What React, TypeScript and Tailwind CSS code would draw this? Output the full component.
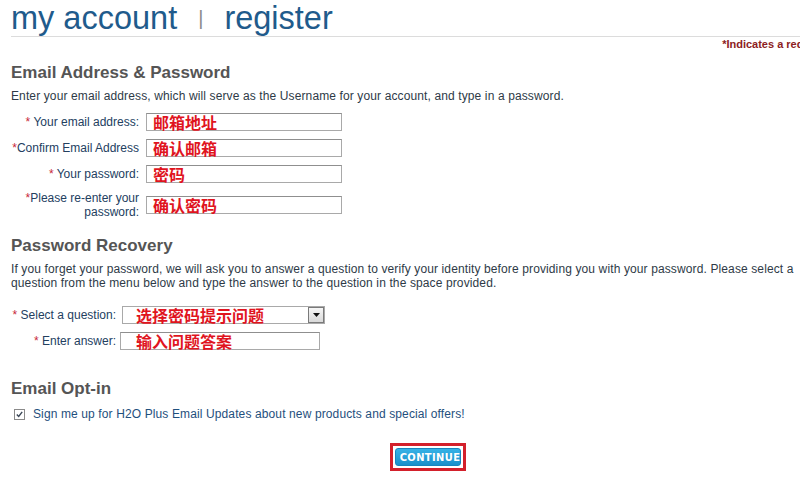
import React from 'react';

const sans = { fontFamily: '"Liberation Sans", Arial, sans-serif' };
const cjk = '[font-family:"Noto_Sans_CJK_SC",sans-serif]';

function Req({ spaced = true }: { spaced?: boolean }) {
  return <span className="text-[#c8283a]">*{spaced ? ' ' : ''}</span>;
}

function FieldBox({ text, w, pl }: { text: string; w: string; pl: string }) {
  return (
    <div className={`flex h-[18px] items-center border border-[#a9a9a9] border-t-[#8f8f8f] bg-white ${w} ${pl}`}>
      <span className={`text-[16px] font-bold leading-none text-[#e0141e] ${cjk}`}>{text}</span>
    </div>
  );
}

export default function App() {
  const rows = [
    { label: 'Your email address:', spaced: true, value: '邮箱地址' },
    { label: 'Confirm Email Address', spaced: false, value: '确认邮箱' },
    { label: 'Your password:', spaced: true, value: '密码' },
  ];

  return (
    <div className="h-[481px] w-[800px] overflow-hidden bg-white" style={sans}>
      <div className="w-[856px] pl-[11px]">
        {/* page title */}
        <div className="flex h-[37px] items-start gap-[21px] border-b border-[#dcdcdc] pt-[2px] text-[32.5px] leading-[32px] text-[#1f5b8c]">
          <span>my account</span>
          <span className="pt-[5px] text-[20px] leading-[22px] text-[#8c8c8c]">|</span>
          <span>register</span>
        </div>
        <div className="flex justify-end pt-[1px] text-[11px] font-bold leading-[13px] text-[#8c1c22]">
          <span className="whitespace-nowrap">*Indicates a required field</span>
        </div>

        {/* email & password */}
        <h2 className="mt-[12px] text-[17px] font-bold leading-[20px] text-[#555555]">Email Address &amp; Password</h2>
        <p className="mt-[6px] text-[12px] leading-[14px] tracking-[0.12px] text-[#2e3a47]">
          Enter your email address, which will serve as the Username for your account, and type in a password.
        </p>
        <div className="mt-[10px] flex flex-col gap-[8px] text-[12px] leading-[13px] text-[#23405f]">
          {rows.map((r) => (
            <div key={r.label} className="flex items-center gap-[7px]">
              <div className="w-[128px] text-right whitespace-nowrap">
                <Req spaced={r.spaced} />
                {r.label}
              </div>
              <FieldBox text={r.value} w="w-[196px]" pl="pl-[6px]" />
            </div>
          ))}
          <div className="flex items-center gap-[7px]">
            <div className="w-[128px] text-right leading-[14px]">
              <Req spaced={false} />
              Please re-enter your
              <br />
              password:
            </div>
            <FieldBox text="确认密码" w="w-[196px]" pl="pl-[6px]" />
          </div>
        </div>

        {/* recovery */}
        <h2 className="mt-[17px] text-[17px] font-bold leading-[20px] text-[#555555]">Password Recovery</h2>
        <p className="mt-[6px] w-[796px] text-[12px] leading-[14px] tracking-[0.12px] text-[#2e3a47]">
          If you forget your password, we will ask you to answer a question to verify your identity before providing you with your password. Please select a question from the menu below and type the answer to the question in the space provided.
        </p>
        <div className="mt-[16px] flex flex-col gap-[8px] text-[12px] leading-[13px] text-[#23405f]">
          <div className="flex items-center gap-[6px]">
            <div className="w-[105px] text-right whitespace-nowrap">
              <Req />
              Select a question:
            </div>
            <div className="flex h-[18px] w-[203px] items-center justify-between border border-[#a9a9a9] bg-white pl-[13px]">
              <span className={`text-[16px] font-bold leading-none text-[#e0141e] ${cjk}`}>选择密码提示问题</span>
              <span className="flex h-[16px] w-[16px] items-center justify-center border border-[#7a7a7a] bg-gradient-to-b from-[#f6f6f6] to-[#d9d9d9]">
                <svg width="7" height="4" viewBox="0 0 7 4">
                  <path d="M0 0h7L3.5 4z" fill="#111" />
                </svg>
              </span>
            </div>
          </div>
          <div className="flex items-center gap-[4px]">
            <div className="w-[105px] text-right whitespace-nowrap">
              <Req />
              Enter answer:
            </div>
            <FieldBox text="输入问题答案" w="w-[200px]" pl="pl-[15px]" />
          </div>
        </div>

        {/* opt-in */}
        <h2 className="mt-[29px] text-[17px] font-bold leading-[20px] text-[#555555]">Email Opt-in</h2>
        <div className="mt-[8px] flex items-center gap-[8px] pl-[3px] text-[12px] leading-[14px] tracking-[0.12px] text-[#1f4f7d]">
          <span className="flex h-[11px] w-[11px] items-center justify-center border border-[#8a8a8a] bg-white">
            <svg width="7" height="7" viewBox="0 0 7 7">
              <path d="M0.8 3.4l1.9 2 3.5-4.6" fill="none" stroke="#3b4756" strokeWidth="1.4" />
            </svg>
          </span>
          <span>Sign me up for H2O Plus Email Updates about new products and special offers!</span>
        </div>

        <div className="mt-[22px] flex justify-center pr-[11px]">
          <div className="border-[3px] border-[#d3202b] p-[2px]">
            <button className="flex h-[18px] w-[66px] items-center justify-center gap-[4px] rounded-[3px] border border-[#1785bd] bg-gradient-to-b from-[#36b2e6] to-[#1890cb] text-[11px] font-bold leading-none tracking-[0.4px] text-white [font-family:'DejaVu_Sans_Condensed',sans-serif]">
              <svg width="5" height="7" viewBox="0 0 5 7">
                <path d="M0 0l5 3.5L0 7z" fill="#fff" />
              </svg>
              CONTINUE
            </button>
          </div>
        </div>
      </div>
    </div>
  );
}
